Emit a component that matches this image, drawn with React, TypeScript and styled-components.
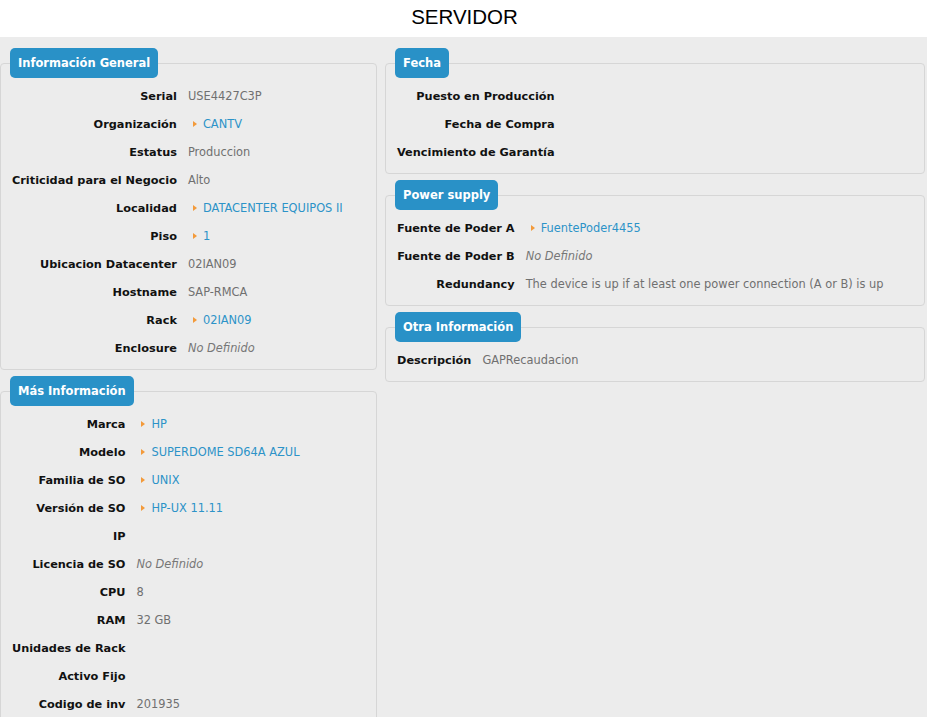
import styled, { createGlobalStyle } from "styled-components";

type Kind = "text" | "link" | "none" | "empty";

interface Field {
    label: string;
    value?: string;
    kind: Kind;
}

interface Section {
    title: string;
    fields: Field[];
}

const leftSections: Section[] = [
    {
        title: "Información General",
        fields: [
            { label: "Serial", value: "USE4427C3P", kind: "text" },
            { label: "Organización", value: "CANTV", kind: "link" },
            { label: "Estatus", value: "Produccion", kind: "text" },
            { label: "Criticidad para el Negocio", value: "Alto", kind: "text" },
            { label: "Localidad", value: "DATACENTER EQUIPOS II", kind: "link" },
            { label: "Piso", value: "1", kind: "link" },
            { label: "Ubicacion Datacenter", value: "02IAN09", kind: "text" },
            { label: "Hostname", value: "SAP-RMCA", kind: "text" },
            { label: "Rack", value: "02IAN09", kind: "link" },
            { label: "Enclosure", kind: "none" },
        ],
    },
    {
        title: "Más Información",
        fields: [
            { label: "Marca", value: "HP", kind: "link" },
            { label: "Modelo", value: "SUPERDOME SD64A AZUL", kind: "link" },
            { label: "Familia de SO", value: "UNIX", kind: "link" },
            { label: "Versión de SO", value: "HP-UX 11.11", kind: "link" },
            { label: "IP", kind: "empty" },
            { label: "Licencia de SO", kind: "none" },
            { label: "CPU", value: "8", kind: "text" },
            { label: "RAM", value: "32 GB", kind: "text" },
            { label: "Unidades de Rack", kind: "empty" },
            { label: "Activo Fijo", kind: "empty" },
            { label: "Codigo de inv", value: "201935", kind: "text" },
        ],
    },
];

const rightSections: Section[] = [
    {
        title: "Fecha",
        fields: [
            { label: "Puesto en Producción", kind: "empty" },
            { label: "Fecha de Compra", kind: "empty" },
            { label: "Vencimiento de Garantía", kind: "empty" },
        ],
    },
    {
        title: "Power supply",
        fields: [
            { label: "Fuente de Poder A", value: "FuentePoder4455", kind: "link" },
            { label: "Fuente de Poder B", kind: "none" },
            {
                label: "Redundancy",
                value: "The device is up if at least one power connection (A or B) is up",
                kind: "text",
            },
        ],
    },
    {
        title: "Otra Información",
        fields: [{ label: "Descripción", value: "GAPRecaudacion", kind: "text" }],
    },
];

function FieldValue({ field }: { field: Field }) {
    if (field.kind === "link") return <LinkValue href="#">{field.value}</LinkValue>;
    if (field.kind === "none") return <Undefined>No Definido</Undefined>;
    if (field.kind === "text") return <PlainValue>{field.value}</PlainValue>;
    return null;
}

function Panel({ section }: { section: Section }) {
    return (
        <Fieldset>
            <Legend>{section.title}</Legend>
            <DetailsTable>
                <tbody>
                    {section.fields.map(f => (
                        <tr key={f.label}>
                            <LabelCell>{f.label}</LabelCell>
                            <ValueCell>
                                <FieldValue field={f} />
                            </ValueCell>
                        </tr>
                    ))}
                </tbody>
            </DetailsTable>
        </Fieldset>
    );
}

export default function App() {
    return (
        <>
            <GlobalStyle />
            <Header>SERVIDOR</Header>
            <Content>
                <Column>
                    {leftSections.map(s => (
                        <Panel key={s.title} section={s} />
                    ))}
                </Column>
                <Column>
                    {rightSections.map(s => (
                        <Panel key={s.title} section={s} />
                    ))}
                </Column>
            </Content>
        </>
    );
}

const GlobalStyle = createGlobalStyle`
    body {
        margin: 0;
        background: #ffffff;
        font-family: "DejaVu Sans", Verdana, sans-serif;
    }
`;

const Header = styled.div`
    height: 37px;
    line-height: 34px;
    text-align: center;
    font-family: "Liberation Sans", Arial, sans-serif;
    font-size: 20.5px;
    color: #000;
    background: #fff;
`;

const Content = styled.div`
    width: 927px;
    height: 680px;
    overflow: hidden;
    box-sizing: border-box;
    padding-top: 11px;
    background: #ececec;
    display: grid;
    grid-template-columns: 377px 540px;
    column-gap: 8px;
    align-items: start;
`;

const Column = styled.div`
    display: flex;
    flex-direction: column;
    gap: 6px;
`;

const Fieldset = styled.fieldset`
    margin: 0;
    min-width: 0;
    padding: 4px 0 7px 0;
    border: 1px solid #d6d6d6;
    border-radius: 4px;
    background: #ececec;
`;

const Legend = styled.legend`
    margin-left: 9px;
    padding: 0 8px;
    height: 30px;
    line-height: 30px;
    background: #2991c7;
    color: #fff;
    border-radius: 5px;
    font-size: 11.5px;
    font-weight: bold;
`;

const DetailsTable = styled.table`
    border-collapse: collapse;
    width: 100%;
`;

const LabelCell = styled.td`
    width: 1%;
    height: 28px;
    padding: 0 5px 0 11px;
    text-align: right;
    white-space: nowrap;
    font-size: 11.3px;
    font-weight: bold;
    color: #111;
`;

const ValueCell = styled.td`
    padding: 0 0 0 6px;
    white-space: nowrap;
    font-size: 11.4px;
    color: #707070;
`;

const PlainValue = styled.span``;

const Undefined = styled.span`
    font-style: italic;
    color: #777;
`;

const LinkValue = styled.a`
    color: #2c93c8;
    text-decoration: none;

    &::before {
        content: "";
        display: inline-block;
        margin: 0 6px 1px 5px;
        border-left: 4px solid #f39a3a;
        border-top: 3px solid transparent;
        border-bottom: 3px solid transparent;
        vertical-align: middle;
    }
`;
